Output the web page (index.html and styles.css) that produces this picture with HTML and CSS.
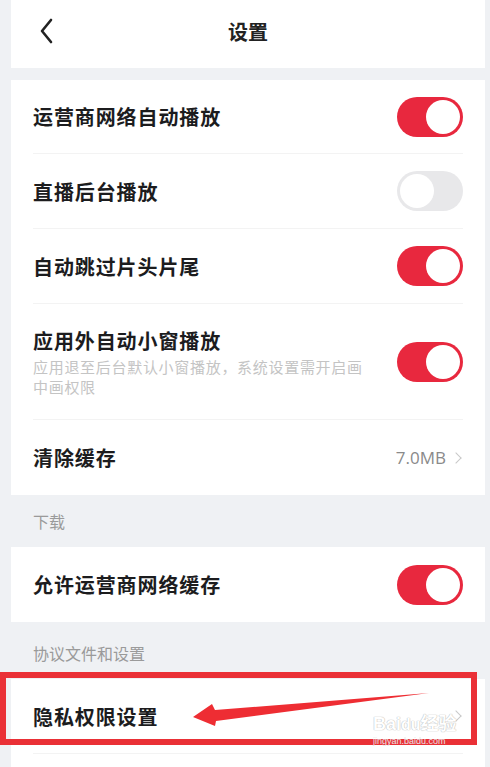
FILE: index.html
```html
<!DOCTYPE html>
<html lang="zh-CN">

<head>
    <meta charset="UTF-8">
    <meta name="viewport" content="width=device-width, initial-scale=1.0">
    <title>设置</title>
    <link rel="stylesheet" href="styles.css">
</head>

<body>
    <div class="page">
        <div class="topbar">
            <svg class="back" width="16" height="26" viewBox="0 0 16 26">
                <path d="M12 2 L3 13 L12 24" fill="none" stroke="#222" stroke-width="2.6" stroke-linecap="round" stroke-linejoin="round"/>
            </svg>
            <h1>设置</h1>
        </div>

        <div class="group top">
            <div class="row first">
                <span class="label">运营商网络自动播放</span>
                <span class="switch on"></span>
            </div>
            <div class="row">
                <span class="label">直播后台播放</span>
                <span class="switch"></span>
            </div>
            <div class="row">
                <span class="label">自动跳过片头片尾</span>
                <span class="switch on"></span>
            </div>
            <div class="row tall">
                <div class="text">
                    <span class="label">应用外自动小窗播放</span>
                    <p class="desc">应用退至后台默认小窗播放，系统设置需开启画中画权限</p>
                </div>
                <span class="switch on"></span>
            </div>
            <div class="row">
                <span class="label">清除缓存</span>
                <span class="value">7.0MB <i class="chev"></i></span>
            </div>
        </div>

        <div class="section-title">下载</div>
        <div class="group">
            <div class="row">
                <span class="label">允许运营商网络缓存</span>
                <span class="switch on"></span>
            </div>
        </div>

        <div class="section-title second">协议文件和设置</div>
        <div class="group last">
            <div class="row">
                <span class="label">隐私权限设置</span>
                <span class="value"><i class="chev"></i></span>
            </div>
            <!-- annotation over the row -->
            <div class="mark"></div>
            <svg class="arrow" width="250" height="40" viewBox="0 0 250 40">
                <polygon points="0,24 19,11 22,17 236,0 23,28 22,33" fill="#ee2d33"/>
            </svg>
            <div class="watermark">
                <span class="wm-big">Bai<b>du</b>经验</span>
                <span class="wm-small">jingyan.baidu.com</span>
            </div>
        </div>
    </div>
</body>

</html>
```

FILE: styles.css
```css
* {
    margin: 0;
    padding: 0;
    box-sizing: border-box;
}
body {
    background-color: #eff1f4;
    font-family: "Noto Sans CJK SC", "Noto Sans", sans-serif;
    color: #1c1c1e;
}
.page {
    padding: 0 5px 0 11px;
}
.topbar {
    position: relative;
    height: 68px;
    background-color: #fff;
    display: flex;
    align-items: center;
    justify-content: center;
}
.back {
    position: absolute;
    left: 28px;
    top: 18px;
}
.topbar h1 {
    font-size: 20px;
    font-weight: 700;
    color: #222;
    margin-top: -5px;
}
.group {
    background-color: #fff;
}
.group.top {
    margin-top: 12px;
}
.group.last {
    position: relative;
    height: 90px;
}
.row {
    margin: 0 22px;
    height: 75px;
    display: flex;
    align-items: center;
    justify-content: space-between;
    border-bottom: 1px solid #f3f3f3;
}
.row:last-child {
    border-bottom: none;
}
.row.first {
    height: 74px;
}
.row.tall {
    height: 116px;
}
.label {
    font-size: 20px;
    font-weight: 700;
    letter-spacing: 0.9px;
}
.text {
    width: 340px;
}
.desc {
    font-size: 15px;
    line-height: 20px;
    color: #c4c4c4;
    letter-spacing: 0.7px;
    margin-top: 2px;
}
.switch {
    width: 66px;
    height: 40px;
    border-radius: 20px;
    background-color: #e8e8ea;
    position: relative;
    flex-shrink: 0;
}
.switch::after {
    content: "";
    position: absolute;
    top: 3px;
    left: 3px;
    width: 34px;
    height: 34px;
    border-radius: 50%;
    background-color: #fff;
}
.switch.on {
    background-color: #e8283e;
}
.switch.on::after {
    left: 29px;
}
.value {
    font-size: 17px;
    color: #8a8a8a;
    display: flex;
    align-items: center;
    gap: 6px;
    font-family: "Open Sans", "Noto Sans", sans-serif;
}
.chev {
    display: inline-block;
    width: 8px;
    height: 8px;
    border-top: 1.5px solid #c8c8c8;
    border-right: 1.5px solid #c8c8c8;
    transform: rotate(45deg);
    margin-right: 3px;
}
.section-title {
    height: 52px;
    padding-left: 22px;
    display: flex;
    align-items: center;
    font-size: 16px;
    color: #9a9a9a;
}
.section-title.second {
    height: 57px;
    padding-top: 4px;
}
.mark {
    position: absolute;
    left: -11px;
    top: -7px;
    width: 477px;
    height: 73px;
    border: 6px solid #ea3036;
}
.arrow {
    position: absolute;
    left: 182px;
    top: 14px;
}
.watermark {
    position: absolute;
    left: 362px;
    top: 35px;
    display: flex;
    flex-direction: column;
    color: #fff;
    text-shadow: 0 0 1px #b8b8b8, 0 0 1px #b8b8b8;
    font-family: "Liberation Sans", "Noto Sans CJK SC", sans-serif;
}
.wm-big {
    font-size: 18px;
    font-weight: 700;
    line-height: 20px;
}
.wm-big b {
    font-size: 16px;
}
.wm-small {
    font-size: 9px;
    line-height: 12px;
    color: #e6e6e6;
    text-shadow: none;
}
```
